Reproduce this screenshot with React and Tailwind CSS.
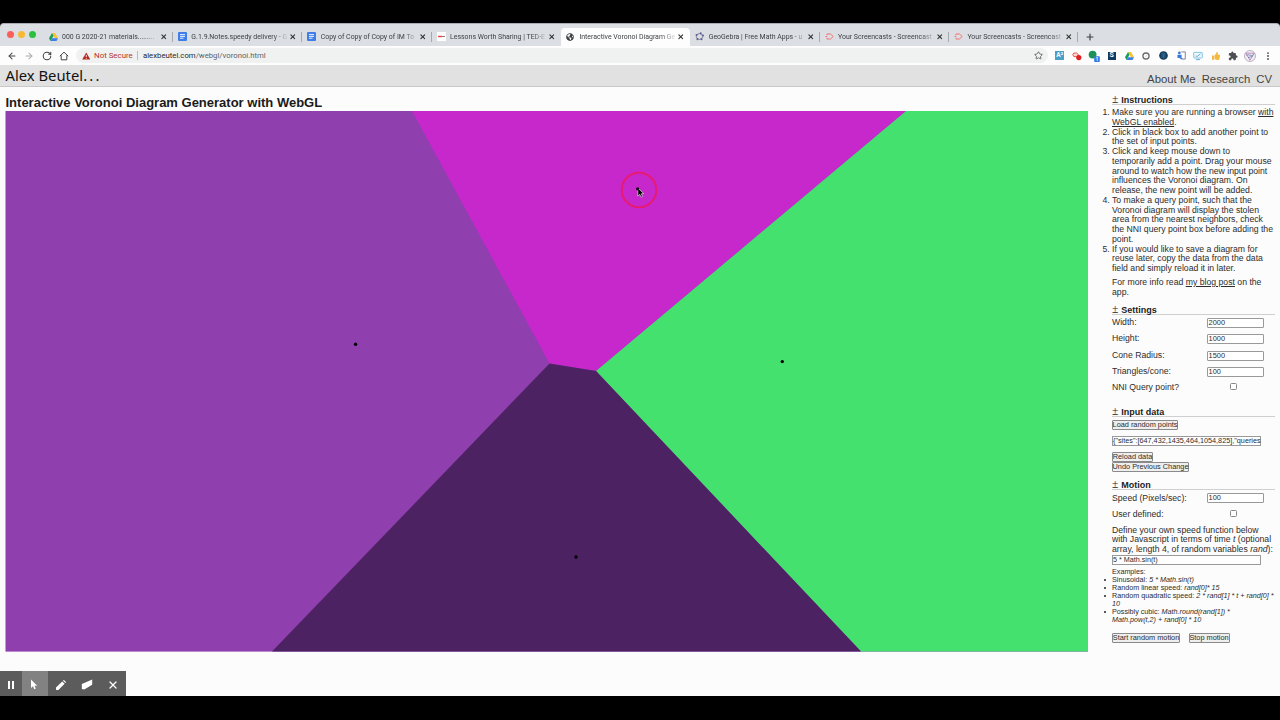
import React from "react";
import { ArrowLeft, ArrowRight, RotateCw, Star, EllipsisVertical, X, Plus } from "lucide-react";
import { FaGlobeAmericas, FaThumbsUp } from "react-icons/fa";
import { MdExtension } from "react-icons/md";

function DriveIcon() {
  return (
    <svg viewBox="0 0 24 21" className="h-[8px] w-[9px]">
      <path d="M8 0h8l8 14h-8z" fill="#fbc02d" />
      <path d="M8 0l4 7-8 14-4-7z" fill="#1a9c57" />
      <path d="M8 14h16l-4 7H4z" fill="#3f7de8" />
    </svg>
  );
}

function DocIcon() {
  return (
    <svg viewBox="0 0 9 9" className="h-[9px] w-[9px]">
      <rect width="9" height="9" rx="1" fill="#3f7de8" />
      <path d="M2 2.6h5M2 4.4h5M2 6.2h3.5" stroke="#fff" strokeWidth="0.9" />
    </svg>
  );
}

function TedIcon() {
  return (
    <svg viewBox="0 0 9 9" className="h-[9px] w-[9px]">
      <rect width="9" height="9" fill="#fff" />
      <path d="M1 4.5h4" stroke="#e0463c" strokeWidth="1.4" />
      <path d="M5 4.5h3" stroke="#9a7773" strokeWidth="1" />
    </svg>
  );
}

function GeoIcon() {
  return (
    <svg viewBox="0 0 10 10" className="h-[9px] w-[9px]">
      <ellipse cx="5" cy="5" rx="3.5" ry="3.2" fill="none" stroke="#74747f" strokeWidth="1" />
      <g fill="#5c5c9c">
        <circle cx="6.3" cy="1.5" r="1.1" />
        <circle cx="1.7" cy="3.4" r="1.1" />
        <circle cx="2.7" cy="8" r="1.1" />
        <circle cx="7.2" cy="8" r="1.1" />
        <circle cx="8.9" cy="4" r="1.1" />
      </g>
    </svg>
  );
}

function CastIcon() {
  return (
    <svg viewBox="0 0 10 10" className="h-[9px] w-[9px]">
      <path d="M2.2 2.2h3.9l3 2.8-3 2.8H2.2V6.4M2.2 3.6V2.2M0.6 5h1.8" fill="none" stroke="#f2736d" strokeWidth="1.1" strokeLinejoin="round" />
    </svg>
  );
}

const tabs = [
  { icon: <DriveIcon />, title: "000 G 2020-21 materials........." },
  { icon: <DocIcon />, title: "G.1.9.Notes.speedy delivery - G" },
  { icon: <DocIcon />, title: "Copy of Copy of Copy of IM To" },
  { icon: <TedIcon />, title: "Lessons Worth Sharing | TED-E" },
  { icon: <FaGlobeAmericas className="h-[8px] w-[8px] text-[#3c4043]" />, title: "Interactive Voronoi Diagram Ge", active: true },
  { icon: <GeoIcon />, title: "GeoGebra | Free Math Apps - u" },
  { icon: <CastIcon />, title: "Your Screencasts - Screencast" },
  { icon: <CastIcon />, title: "Your Screencasts - Screencast" },
];

function TabStrip() {
  return (
    <div className="flex h-[23px] items-end rounded-t-[4px] border-t border-[#a9acb0] bg-[#dbdee3]">
      <div className="flex h-[18px] w-[43.5px] shrink-0 items-center gap-[4.6px] pb-[5px] pl-[7px]">
        <span className="h-[6.5px] w-[6.5px] rounded-full bg-[#fb5f57]" />
        <span className="h-[6.5px] w-[6.5px] rounded-full bg-[#f8b932]" />
        <span className="h-[6.5px] w-[6.5px] rounded-full bg-[#2bc03f]" />
      </div>
      {tabs.map((t, i) => (
        <div
          key={i}
          className={
            "flex h-[18.5px] w-[129.35px] shrink-0 items-center pl-[5px] " + (t.active ? "rounded-t-[4px] bg-[#fdfdfd]" : "")
          }
        >
          <span className="flex w-[9px] shrink-0 justify-center">{t.icon}</span>
          <span className="ml-[4.5px] w-[98px] whitespace-nowrap text-[6.95px] leading-[10px] text-[#3c3f43] [mask-image:linear-gradient(to_right,black_84%,transparent_100%)]">
            {t.title}
          </span>
          <X className="h-[7.5px] w-[7.5px] shrink-0 text-[#333]" strokeWidth={3.4} />
          <span className={"ml-auto h-[10px] w-px " + (t.active || i === 3 ? "" : "bg-[#a6a9ae]")} />
        </div>
      ))}
      <Plus className="mb-[4.5px] ml-[6.5px] h-[10px] w-[10px] text-[#3c4043]" strokeWidth={2.8} />
    </div>
  );
}

function Extensions() {
  const cell = "flex w-[17.35px] shrink-0 items-center justify-center";
  return (
    <div className="flex h-full items-center">
      <span className={cell}>
        <span className="flex h-[9px] w-[9px] items-center justify-center bg-[#4b9fc9] text-[6.5px] font-bold leading-none text-white">A²</span>
      </span>
      <span className={cell}>
        <svg viewBox="0 0 10 10" className="h-[10px] w-[10px]">
          <path d="M1.8 2h2.8l2 1.8-2 1.8H1.8L.8 3.8z" fill="#fbd7d4" stroke="#e8473f" strokeWidth="0.9" />
          <circle cx="6.8" cy="6.6" r="2.6" fill="#e01d20" />
        </svg>
      </span>
      <span className={cell}>
        <svg viewBox="0 0 12 12" className="h-[12px] w-[12px]">
          <circle cx="4.6" cy="4.6" r="3.9" fill="#1c9256" />
          <rect x="6.2" y="6.2" width="5.6" height="5.8" rx="0.8" fill="#3578e5" />
          <text x="9" y="10.8" fontSize="4.5" fontWeight="bold" textAnchor="middle" fill="#fff">1</text>
        </svg>
      </span>
      <span className={cell}>
        <span className="flex h-[8px] w-[8px] items-center justify-center bg-[#123a61] text-[7px] font-bold leading-none text-white">S</span>
      </span>
      <span className={cell}><DriveIcon /></span>
      <span className={cell}>
        <svg viewBox="0 0 10 10" className="h-[8px] w-[8px]">
          <circle cx="5" cy="5" r="3.8" fill="#fff" stroke="#6b6b6b" strokeWidth="1.7" />
          <path d="M4.2 6.2l1.6-2.3" stroke="#bbb" strokeWidth="0.8" />
        </svg>
      </span>
      <span className={cell}>
        <svg viewBox="0 0 10 10" className="h-[9px] w-[9px]">
          <circle cx="5" cy="5" r="4.8" fill="#143b5c" />
          <path d="M3.4 8V5.4a1.6 1.6 0 013.2 0V8M5 4v4M2.5 3.8a3 3 0 015 0" stroke="#4590bf" strokeWidth="0.6" fill="none" />
        </svg>
      </span>
      <span className={cell}>
        <svg viewBox="0 0 10 10" className="h-[9px] w-[9px]">
          <path d="M4.8 1h4.4v8H4.8" fill="none" stroke="#777b85" strokeWidth="1" />
          <circle cx="2.6" cy="2.1" r="1.5" fill="#3a76d6" />
          <path d="M0.5 4.2h4.6v3.5H0.5z" fill="#3a76d6" />
          <path d="M3.2 8.3h3" stroke="#3a76d6" />
        </svg>
      </span>
      <span className={cell}>
        <svg viewBox="0 0 10 10" className="h-[10px] w-[10px]">
          <rect x="0.7" y="1.4" width="8.6" height="5.6" rx="0.6" fill="#eff8fc" stroke="#7cbddd" strokeWidth="0.9" />
          <path d="M2.5 5.2h2l3-2.3M3 8.6h4" stroke="#58a5cd" strokeWidth="0.9" fill="none" />
        </svg>
      </span>
      <span className={cell}><FaThumbsUp className="h-[8px] w-[8px] text-[#f6b83c]" /></span>
      <span className={cell}><MdExtension className="h-[10px] w-[10px] text-[#4c5054]" /></span>
      <span className={cell}>
        <svg viewBox="0 0 12 12" className="h-[12px] w-[12px]">
          <circle cx="6" cy="6" r="5.5" fill="#f1edf3" stroke="#93869f" strokeWidth="0.6" />
          <path d="M1.8 3.2l4.2 7 4.2-7z" fill="none" stroke="#a66cab" strokeWidth="0.7" />
          <path d="M2.5 5.5c2-2 5 1.5 7-1M4 7.5l4.5-1" fill="none" stroke="#5970a7" strokeWidth="0.7" />
        </svg>
      </span>
      <span className={cell}><EllipsisVertical className="h-[10px] w-[10px] text-[#4c5054]" strokeWidth={2.6} /></span>
    </div>
  );
}

function Toolbar() {
  const nav = "h-[10px] w-[10px] shrink-0";
  return (
    <div className="flex h-[19px] items-center bg-[#fdfdfd] pl-[7px]">
      <div className="flex w-[69px] gap-[7.3px]">
        <ArrowLeft className={nav + " text-[#444]"} strokeWidth={2.5} />
        <ArrowRight className={nav + " text-[#aaa]"} strokeWidth={2.5} />
        <RotateCw className={nav + " text-[#444]"} strokeWidth={2.5} />
        <svg viewBox="0 0 10 10" className={nav}>
          <path d="M0.8 5.2L5 1.2l4.2 4M2.2 4.4v4.4h5.6V4.4" fill="none" stroke="#444" strokeWidth="1" />
        </svg>
      </div>
      <div className="flex h-[15px] w-[972px] items-center rounded-full bg-[#f0f2f2] pl-[5.5px] pr-[5.5px] leading-[12px]">
        <svg viewBox="0 0 9 8" className="h-[8px] w-[8.5px]">
          <path d="M4.5 0.3L8.8 7.8H0.2z" fill="#b5271f" />
          <path d="M4.5 2.8v2.4M4.5 6v1" stroke="#fff" strokeWidth="0.9" />
        </svg>
        <span className="ml-[4px] w-[43px] whitespace-nowrap text-[7.9px] text-[#b5332b]">Not Secure</span>
        <span className="mr-[5px] h-[9px] w-px bg-[#bbb]" />
        <span className="whitespace-nowrap text-[7.75px] text-[#5c5f62]"><span className="text-[#26282a]">alexbeutel.com</span>/webgl/voronoi.html</span>
        <Star className="ml-auto h-[9px] w-[9px] text-[#555]" strokeWidth={2.2} />
      </div>
      <div className="ml-[3px] h-full"><Extensions /></div>
    </div>
  );
}

function Diagram() {
  return (
    <svg viewBox="5 111 1083 541" className="ml-[5px] h-[541px] w-[1083px]">
      <rect x="5.5" y="110" width="1084" height="541.6" fill="#8f3fae" />
      <path d="M412 111H906L596 371L549.5 363.5Z" fill="#c628cb" />
      <path d="M906 111H1088V651.6H861L596 371Z" fill="#44e16e" />
      <path d="M272 651.6L549.5 363.5L596 371L861 651.6Z" fill="#4d2263" />
      <circle cx="355.6" cy="344.3" r="1.7" fill="#000" />
      <circle cx="782.3" cy="361.6" r="1.7" fill="#000" />
      <circle cx="576" cy="557" r="1.7" fill="#000" />
      <circle cx="639" cy="190" r="17.3" fill="none" stroke="#e81a72" strokeWidth="2" />
      <path d="M637.8 188v8l2-1.6 1.3 2.8 1.5-.8-1.3-2.6 2.4-.3z" fill="#000" stroke="#ddd" strokeWidth="0.7" />
      <circle cx="637.6" cy="188.8" r="1.6" fill="#111" />
    </svg>
  );
}

function Heading({ children }) {
  return (
    <div className="flex h-[10px] items-center whitespace-nowrap border-b border-[#cfcfcf] pt-[1px] text-[9px] font-bold leading-[9px] text-[#222]">
      <span className="mr-[2px] w-[7.3px] pb-[1px] font-['Liberation_Serif',serif] text-[11.5px] font-normal">±</span>
      {children}
    </div>
  );
}

const steps = [
  [<>Make sure you are running a browser <u>with</u></>, <><u>WebGL enabled</u>.</>],
  ["Click in black box to add another point to", "the set of input points."],
  [
    "Click and keep mouse down to",
    "temporarily add a point. Drag your mouse",
    "around to watch how the new input point",
    "influences the Voronoi diagram. On",
    "release, the new point will be added.",
  ],
  [
    "To make a query point, such that the",
    "Voronoi diagram will display the stolen",
    "area from the nearest neighbors, check",
    "the NNI query point box before adding the",
    "point.",
  ],
  ["If you would like to save a diagram for", "reuse later, copy the data from the data", "field and simply reload it in later."],
];

const examples = [
  ["Sinusoidal: ", ["5 * Math.sin(t)"]],
  ["Random linear speed: ", ["rand[0]* 15"]],
  ["Random quadratic speed: ", ["2 * rand[1] * t + rand[0] *", "10"]],
  ["Possibly cubic: ", ["Math.round(rand[1]) *", "Math.pow(t,2) + rand[0] * 10"]],
];

function Lines({ items }) {
  return items.map((l, i) => <div key={i} className="whitespace-nowrap">{l}</div>);
}

function Field({ label, value }) {
  return (
    <div className="flex h-[16.2px] items-center">
      <span className="w-[94.6px] whitespace-nowrap">{label}</span>
      {value ? (
        <span className="flex h-[10px] w-[57px] items-center rounded-[1px] border border-[#999] bg-white pl-[1px] text-[7.4px] leading-[8px]">{value}</span>
      ) : (
        <span className="mb-[2px] ml-[23.5px] h-[7px] w-[7px] rounded-[1.5px] border border-[#888] bg-white" />
      )}
    </div>
  );
}

function Button({ children, className }) {
  return (
    <button className={"flex h-[10px] items-center justify-center whitespace-nowrap rounded-[1px] border border-[#8a8a8a] bg-[#efefef] text-[7.35px] leading-[8px] " + className}>
      {children}
    </button>
  );
}

function Sidebar() {
  return (
    <aside className="ml-[24px] w-[162.5px] pt-[8px] text-[8.68px] leading-[9.75px] text-[#2c2c2c]">
      <Heading>Instructions</Heading>
      <ol className="mt-[3px]">
        {steps.map((s, i) => (
          <li key={i} className="flex">
            <span className="-ml-[9.5px] w-[9.5px] shrink-0">{i + 1}.</span>
            <div><Lines items={s} /></div>
          </li>
        ))}
      </ol>
      <div className="mt-[4.3px]">
        <Lines items={[<>For more info read <u>my blog post</u> on the</>, "app."]} />
      </div>
      <div className="mt-[7.5px]"><Heading>Settings</Heading></div>
      <div className="h-[92px]">
        <Field label="Width:" value="2000" />
        <Field label="Height:" value="1000" />
        <Field label="Cone Radius:" value="1500" />
        <Field label="Triangles/cone:" value="100" />
        <Field label="NNI Query point?" />
      </div>
      <Heading>Input data</Heading>
      <Button className="mt-[3px] w-[66px]">Load random points</Button>
      <div className="mt-[6px] h-[10px] w-[149px] whitespace-nowrap border border-[#999] bg-white text-[7.25px] leading-[8px]">
        {'{"sites":[647,432,1435,464,1054,825],"queries'}
      </div>
      <Button className="mt-[6px] w-[41px]">Reload data</Button>
      <Button className="w-[77px]">Undo Previous Change</Button>
      <div className="mt-[8.3px]"><Heading>Motion</Heading></div>
      <Field label="Speed (Pixels/sec):" value="100" />
      <Field label="User defined:" />
      <div className="mt-[3px]">
        <Lines
          items={[
            "Define your own speed function below",
            <>with Javascript in terms of time <i>t</i> (optional</>,
            <>array, length 4, of random variables <i>rand</i>):</>,
          ]}
        />
      </div>
      <div className="h-[10px] w-[149px] border border-[#999] bg-white text-[7.2px] leading-[8px]">5 * Math.sin(t)</div>
      <div className="mt-[2.8px] text-[7.2px] leading-[8.1px]">
        <div>Examples:</div>
        <ul>
          {examples.map(([label, lines], i) => (
            <li key={i} className="flex">
              <span className="-ml-[8.5px] mr-[6.5px] mt-[3px] h-[2px] w-[2px] shrink-0 rounded-full bg-[#222]" />
              <div className="whitespace-nowrap">
                {label}<i>{lines[0]}</i>
                {lines[1] && <div className="italic">{lines[1]}</div>}
              </div>
            </li>
          ))}
        </ul>
      </div>
      <div className="mt-[9px] flex gap-[8.5px]">
        <Button className="w-[68px]">Start random motion</Button>
        <Button className="w-[41px]">Stop motion</Button>
      </div>
    </aside>
  );
}

function RecorderBar() {
  const cell = "flex h-full w-[26px] items-center justify-center pt-[2px] ";
  return (
    <div className="absolute bottom-[24px] left-0 flex h-[25px] w-[125.5px] bg-[#5c5c5c] text-white">
      <span className="flex h-full w-[22px] items-center justify-center gap-[2px] pt-[2px]">
        <i className="h-[8px] w-[2px] bg-white" />
        <i className="h-[8px] w-[2px] bg-white" />
      </span>
      <span className={cell + "bg-[#828282]"}>
        <svg viewBox="0 0 8 11" className="mr-[1px] h-[11px] w-[8px]"><path d="M1 0.5v8.5l2-1.8 1.3 3 1.5-.7-1.3-2.8h2.7z" fill="#fff" /></svg>
      </span>
      <span className={cell}>
        <svg viewBox="0 0 10 10" className="h-[10px] w-[10px]"><path d="M0 10v-2.4L6.2 1.4 8.6 3.8 2.4 10zM6.9.7l1-.7L10 2.1l-.7 1z" fill="#fff" /></svg>
      </span>
      <span className={cell}>
        <svg viewBox="0 0 12 11" className="h-[11px] w-[12px]"><path d="M0.8 5L11.2 0.4V5.8L3.2 10.6 0.8 10z" fill="#fff" /></svg>
      </span>
      <span className={cell}><X className="h-[12px] w-[12px]" strokeWidth={2.4} /></span>
    </div>
  );
}

export default function App() {
  return (
    <div className="relative h-[720px] w-[1280px] overflow-hidden bg-black pt-[23px] font-['Liberation_Sans',Arial,sans-serif]">
      <div className="font-[Roboto,sans-serif]">
        <TabStrip />
        <Toolbar />
      </div>
      <header className="flex h-[22px] items-center justify-between border-b border-[#c9c9c9] bg-[#e1e1e1] pl-[5.5px] pr-[8px]">
        <h1 className="whitespace-nowrap pb-[1px] font-['Noto_Sans',sans-serif] text-[14.8px] leading-[20px] text-[#111]">
          Alex Beutel<span className="tracking-[2.2px]">...</span>
        </h1>
        <nav className="flex gap-[6px] whitespace-nowrap pt-[6px] text-[11.35px] leading-[14px] text-[#444]">
          <span>About Me</span>
          <span>Research</span>
          <span>CV</span>
        </nav>
      </header>
      <div className="flex h-[609px] bg-[#fcfcfc]">
        <main className="w-[1088px] shrink-0">
          <h2 className="h-[24px] whitespace-nowrap pl-[5.5px] pt-[8px] text-[13px] font-bold leading-[16px] text-[#1a1a1a]">
            Interactive Voronoi Diagram Generator with WebGL
          </h2>
          <Diagram />
        </main>
        <Sidebar />
      </div>
      <RecorderBar />
    </div>
  );
}
